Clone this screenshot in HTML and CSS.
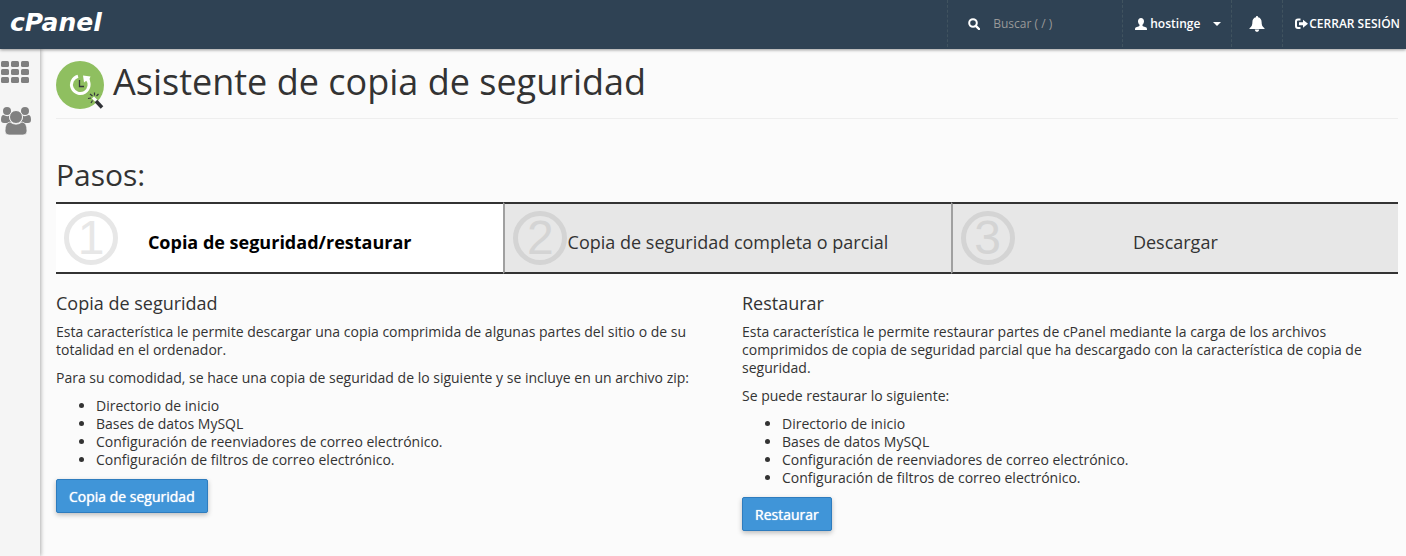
FILE: index.html
```html
<!DOCTYPE html>
<html lang="es">
  <head>
    <meta charset="utf-8">
    <title>cPanel - Asistente de copia de seguridad</title>
    <link rel="stylesheet" href="styles.css">
  </head>
  <body>
    <header class="navbar">
      <a class="logo" href="#">cPanel</a>

      <form class="nav-item nav-search">
        <svg width="12" height="12" viewBox="0 0 12 12"><circle cx="5" cy="5" r="3.8" fill="none" stroke="#fff" stroke-width="2"/><path d="M7.8 7.8L11 11" stroke="#fff" stroke-width="2.4" stroke-linecap="round"/></svg>
        <input type="text" id="search" aria-label="Buscar" placeholder="Buscar ( / )">
      </form>
      <a class="nav-item nav-user" href="#">
        <svg width="12" height="12" viewBox="0 0 12 12"><path fill="#fff" d="M6 0C4.200 0 3 1.300 3 3.200C3 4.800 3.700 6 4.600 6.700C4.700 7.600 4.400 8 3.400 8.400L1.200 9.300C.3 9.700 0 10.300 0 12H12C12 10.300 11.700 9.700 10.800 9.300L8.600 8.400C7.600 8 7.300 7.600 7.400 6.700C8.300 6 9 4.800 9 3.200C9 1.300 7.800 0 6 0Z"/></svg>
        <span>hostinge</span>
        <i class="caret"></i>
      </a>
      <a class="nav-item nav-bell" href="#" aria-label="Notificaciones">
        <svg width="16" height="16" viewBox="0 0 16 16"><path fill="#fff" d="M8 0C7.300 0 6.900.5 7 1.200C4.600 1.700 3.400 3.500 3.400 6C3.400 9 2.700 10.800.5 12.300V13H15.500V12.300C13.300 10.800 12.600 9 12.600 6C12.600 3.500 11.400 1.700 9 1.200C9.100.5 8.700 0 8 0ZM5.800 13.500C6 15 6.900 15.800 8 15.800S10 15 10.200 13.500Z"/></svg>
      </a>
      <a class="nav-item nav-logout" href="#">
        <svg width="13" height="12" viewBox="0 0 13 12"><path fill="none" stroke="#fff" stroke-width="2" d="M5.500 1.500H3Q1 1.500 1 3.500V8Q1 10 3 10H5.500"/><path fill="#fff" d="M4 4.300H8V1.800L13 5.800L8 9.800V7.300H4Z"/></svg>
        <span>CERRAR SESIÓN</span>
      </a>
    </header>

    <div class="page">
      <nav class="sidebar">
        <a href="#" aria-label="Inicio">
          <svg width="28" height="22" viewBox="0 0 28 22" fill="#808080"><rect width="8" height="6" rx="1.500"/><rect x="10" width="8" height="6" rx="1.500"/><rect x="20" width="8" height="6" rx="1.500"/><rect y="8" width="8" height="6" rx="1.500"/><rect x="10" y="8" width="8" height="6" rx="1.500"/><rect x="20" y="8" width="8" height="6" rx="1.500"/><rect y="16" width="8" height="6" rx="1.500"/><rect x="10" y="16" width="8" height="6" rx="1.500"/><rect x="20" y="16" width="8" height="6" rx="1.500"/></svg>
        </a>
        <a href="#" aria-label="Usuarios">
          <svg width="30" height="28" viewBox="0 0 30 28" fill="#808080"><circle cx="6" cy="4" r="4"/><circle cx="24" cy="4" r="4"/><path d="M2.500 8Q6 10 8.500 8.500Q8 13 10.500 15.500Q7 15.500 5.500 16H3Q0 16 0 13Q0 8 2.500 8ZM27.500 8Q24 10 21.500 8.500Q22 13 19.500 15.500Q23 15.500 24.500 16H27Q30 16 30 13Q30 8 27.500 8Z"/><circle cx="15" cy="10" r="6.500" stroke="#f5f5f5"/><path stroke="#f5f5f5" stroke-width=".7" d="M9 15Q15 19.500 21 15Q26 15.500 26 24Q26 28 22 28H8Q4 28 4 24Q4 15.500 9 15Z"/></svg>
        </a>
      </nav>

      <main class="content">
        <div class="page-header">
          <svg width="48" height="48" viewBox="0 0 48 48">
            <circle cx="24" cy="24" r="24" fill="#8fbf60"/>
            <path fill="none" stroke="#fff" stroke-width="3" d="M22 15.200A8.800 8.800 0 1 0 31 18"/>
            <path fill="#fff" d="M27 14.500L34.500 15.500L33.500 18L34 20L31 19.200L28 21.500Z"/>
            <path fill="none" stroke="#34373b" stroke-width="1.300" d="M23.500 19V25.500H28"/>
            <path stroke="#34373b" stroke-width="1.200" d="M32 37.500L35 37M34 33L36.500 35M38.500 31.500V34.500M42.500 33L40.500 35M35 42L36.500 39.500"/>
            <path stroke="#fff" stroke-width="3" d="M37 36.500L41 40.500"/>
            <path stroke="#303236" stroke-width="3.500" d="M40 40L46 46.500"/>
          </svg>
          <h1>Asistente de copia de seguridad</h1>
        </div>

        <h2>Pasos:</h2>
        <ol class="steps">
          <li class="step active"><span class="step-number">1</span>Copia de seguridad/restaurar</li>
          <li class="step"><span class="step-number">2</span>Copia de seguridad completa o parcial</li>
          <li class="step"><span class="step-number">3</span>Descargar</li>
        </ol>

        <div class="row">
          <section class="col">
            <h3>Copia de seguridad</h3>
            <p>Esta característica le permite descargar una copia comprimida de algunas partes del sitio o de su totalidad en el ordenador.</p>
            <p>Para su comodidad, se hace una copia de seguridad de lo siguiente y se incluye en un archivo zip:</p>
            <ul>
              <li>Directorio de inicio</li>
              <li>Bases de datos MySQL</li>
              <li>Configuración de reenviadores de correo electrónico.</li>
              <li>Configuración de filtros de correo electrónico.</li>
            </ul>
            <button type="button" class="btn">Copia de seguridad</button>
          </section>
          <section class="col">
            <h3>Restaurar</h3>
            <p>Esta característica le permite restaurar partes de cPanel mediante la carga de los archivos comprimidos de copia de seguridad parcial que ha descargado con la característica de copia de seguridad.</p>
            <p>Se puede restaurar lo siguiente:</p>
            <ul>
              <li>Directorio de inicio</li>
              <li>Bases de datos MySQL</li>
              <li>Configuración de reenviadores de correo electrónico.</li>
              <li>Configuración de filtros de correo electrónico.</li>
            </ul>
            <button type="button" class="btn">Restaurar</button>
          </section>
        </div>
      </main>
    </div>
  </body>
</html>
```
FILE: styles.css
```css
* {
  box-sizing: border-box;
}

body {
  display: flex;
  flex-direction: column;
  min-height: 100vh;
  margin: 0;
  background-color: #fbfbfb;
  color: #333333;
  font-family: "Open Sans", sans-serif;
  font-size: 14px;
  line-height: 18px;
}

svg {
  display: block;
  flex-shrink: 0;
}

/* top bar */
.navbar {
  display: flex;
  height: 49px;
  background-color: #2f4254;
  box-shadow: 0 1px 3px rgba(0, 0, 0, 0.4);
  position: relative;
  z-index: 1;
}

.logo {
  margin-right: auto;
  padding-left: 10px;
  color: #ffffff;
  font-family: "DejaVu Sans", sans-serif;
  font-size: 25px;
  font-style: italic;
  font-weight: 700;
  line-height: 46px;
  text-decoration: none;
}

.nav-item {
  display: flex;
  align-items: center;
  height: 47px;
  border-left: 1px dashed #40535f;
  color: #ffffff;
  font-size: 12px;
  font-weight: 600;
  text-decoration: none;
}

.nav-search {
  width: 175px;
  padding-left: 20px;
  gap: 13px;
}

.nav-search input {
  width: 110px;
  padding: 0;
  border: none;
  outline: none;
  background: none;
  color: #ffffff;
  font-family: inherit;
  font-size: 12px;
}

.nav-search input::placeholder {
  color: #999999;
}

.nav-user {
  width: 109px;
  padding-left: 12px;
  gap: 3px;
}

.caret {
  margin-left: 10px;
  border-top: 4px solid #ffffff;
  border-left: 4px solid transparent;
  border-right: 4px solid transparent;
}

.nav-bell {
  width: 51px;
  justify-content: center;
}

.nav-logout {
  padding: 0 6px 0 12px;
  gap: 1px;
}

.page {
  display: flex;
  flex: 1;
}

.sidebar {
  display: flex;
  flex-direction: column;
  gap: 24px;
  width: 40px;
  padding: 12px 0 0 1px;
  background-color: #f5f5f5;
  box-shadow: 1px 0 4px rgba(0, 0, 0, 0.3);
}

.content {
  flex: 1;
  padding: 12px 8px 16px 16px;
}

.page-header {
  display: flex;
  gap: 9px;
  height: 58px;
  border-bottom: 1px solid #eeeeee;
}

h1,
h2,
h3 {
  margin: 0;
  font-weight: 400;
}

h1 {
  font-size: 36px;
  line-height: 42px;
}

h2 {
  margin-top: 40px;
  font-size: 30px;
  line-height: 32px;
}

h3 {
  margin-bottom: 10px;
  font-size: 18px;
  line-height: 20px;
}

/* wizard steps */
.steps {
  display: grid;
  grid-template-columns: repeat(3, 1fr);
  margin: 11px 0 19px;
  padding: 0;
  list-style: none;
}

.step {
  position: relative;
  border-top: 2px solid #333333;
  border-bottom: 2px solid #333333;
  background-color: #e7e7e7;
  font-size: 18px;
  line-height: 68px;
  padding-top: 4px;
  height: 72px;
  text-align: center;
}

.step + .step {
  border-left: 2px solid #a0a0a0;
}

.step.active {
  background-color: #ffffff;
  color: #000000;
  font-weight: 700;
}

.step-number {
  position: absolute;
  top: 7px;
  left: 8px;
  width: 54px;
  height: 54px;
  border: 5px solid #d4d4d4;
  border-radius: 50%;
  color: #d4d4d4;
  font-family: "Liberation Sans", sans-serif;
  font-size: 48px;
  font-weight: 400;
  line-height: 44px;
}

.active .step-number {
  border-color: #e7e7e7;
  color: #e7e7e7;
}

.row {
  display: grid;
  grid-template-columns: 1fr 1fr;
  gap: 30px;
}

p {
  margin: 0 0 10px;
}

ul {
  margin: 0 0 10px;
  padding-left: 40px;
}

.btn {
  height: 34px;
  padding: 0 12px;
  border: 1px solid #2e7cbe;
  border-radius: 2px;
  background-color: #4095d8;
  box-shadow: 0 2px 5px rgba(0, 0, 0, 0.25);
  color: #ffffff;
  font-family: inherit;
  font-size: 14px;
  text-shadow: 0 0 1px #ffffff;
  cursor: pointer;
}

.btn:hover {
  background-color: #2e7cbe;
}
```
